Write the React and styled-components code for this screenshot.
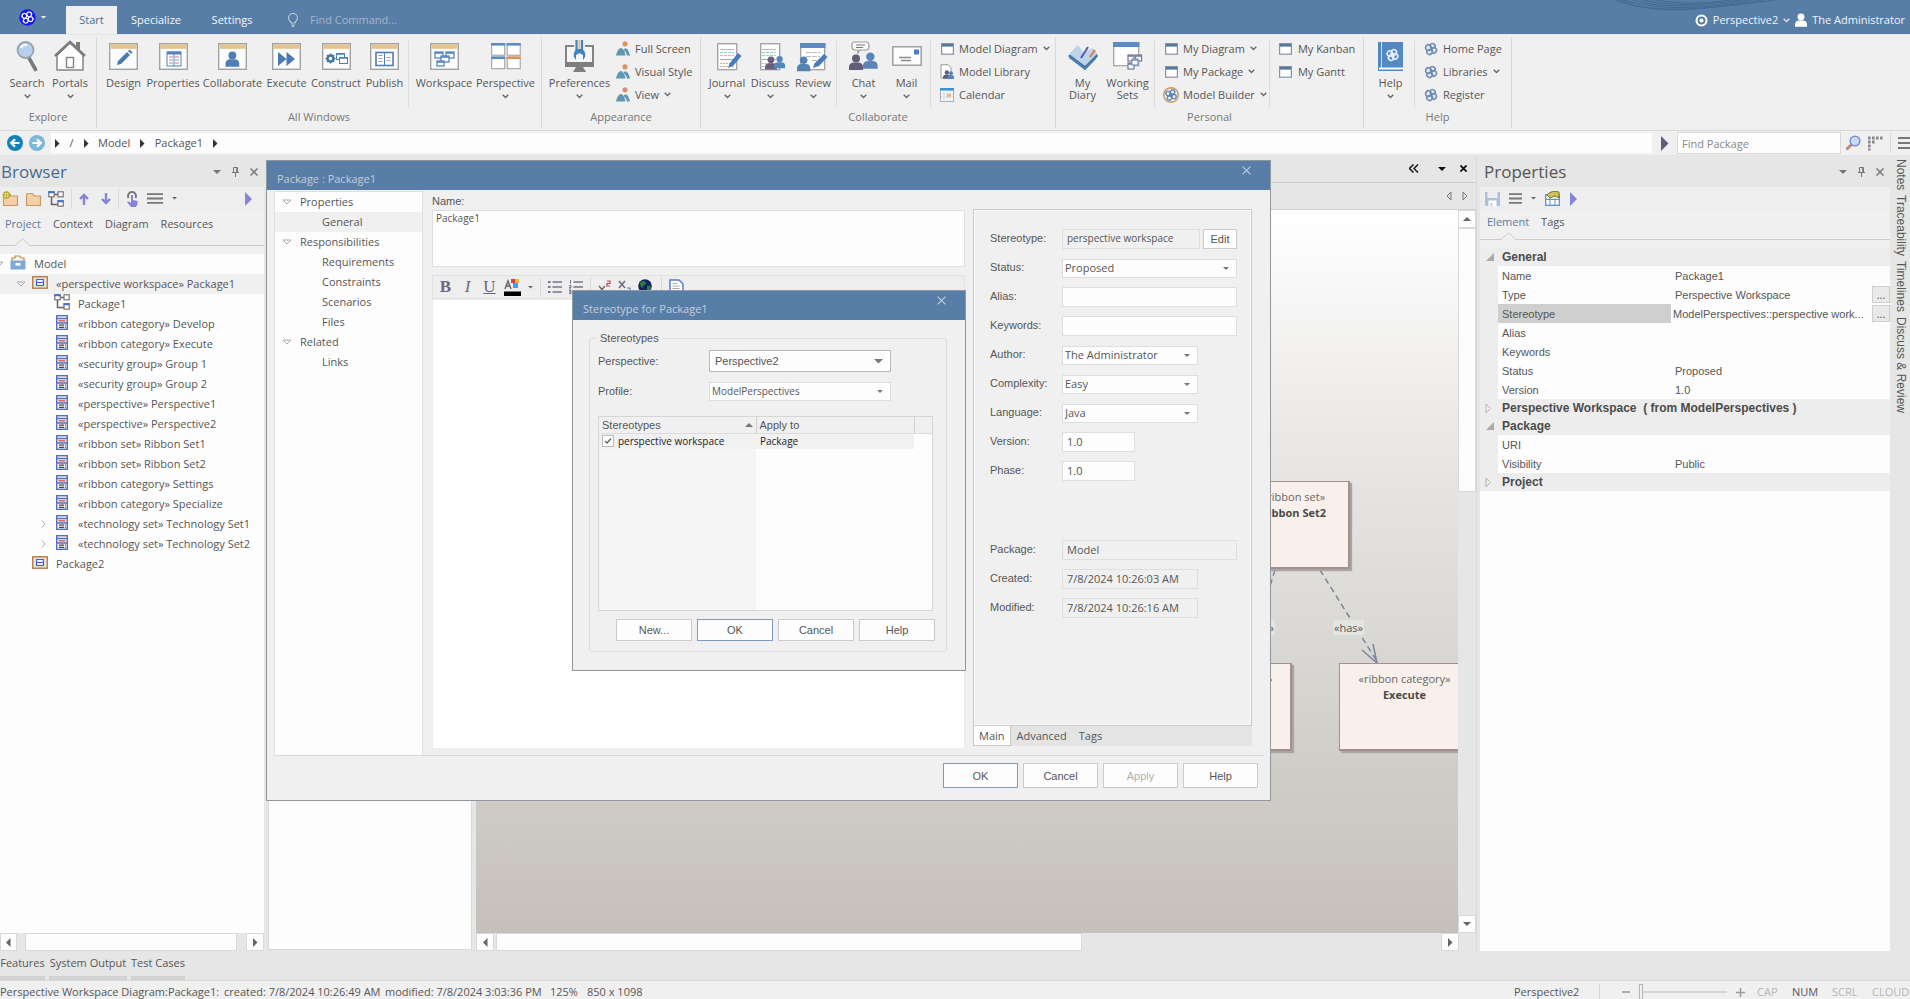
import React from "react";
import styled, { createGlobalStyle, css } from "styled-components";

const c = {
  blue: "#587da7",
  face: "#f0f0f0",
  band: "#e6e6e6",
  line: "#d9d9d9",
  text: "#565656",
  icon: "#4f7db8",
  violet: "#8583d8",
};

const Global = createGlobalStyle`
  * { box-sizing: border-box; }
  body { margin: 0; background: ${c.band}; overflow: hidden; }
  body, button, input, select, textarea {
    font-family: "Open Sans", "Noto Sans", sans-serif;
    font-size: 11px;
    line-height: 16px;
    color: ${c.text};
  }
  button { border: 0; padding: 0; background: none; white-space: nowrap; }
  a { color: inherit; text-decoration: none; }
  svg { display: block; flex: none; }
`;

/* ---------- shell ---------- */

const Shell = styled.div`
  position: relative;
  display: flex;
  flex-direction: column;
  height: 100vh;
  overflow: hidden;
`;

const Header = styled.header`
  position: relative;
  flex: none;
  display: flex;
  align-items: flex-end;
  height: 34px;
  background: ${c.blue};
  color: #eef2f7;
`;

const AppButton = styled.button`
  display: flex;
  align-items: center;
  gap: 5px;
  width: 66px;
  height: 34px;
  padding-left: 19px;
`;

const RibbonTab = styled.button`
  width: ${(p) => p.$w}px;
  height: 28px;
  font-size: 11px;
  background: ${(p) => (p.$active ? c.face : "transparent")};
  color: ${(p) => (p.$active ? "#4a6f9b" : "#f4f7fa")};
`;

const FindCommand = styled.label`
  display: flex;
  align-items: center;
  gap: 11px;
  height: 28px;
  padding-left: 18px;
  input {
    width: 160px;
    border: 0;
    padding: 0;
    background: none;
    color: #fff;
  }
  input::placeholder { color: #a5b5c8; opacity: 1; }
`;

const HeaderRight = styled.div`
  display: flex;
  align-items: center;
  gap: 5px;
  height: 28px;
  margin: 0 -7px 0 auto;
  button { display: flex; align-items: center; gap: 5px; color: #f1f4f8; }
`;

const Waves = styled.svg`
  position: absolute;
  top: 0;
  right: 130px;
`;

/* ---------- ribbon ---------- */

const Ribbon = styled.nav`
  flex: none;
  display: flex;
  height: 97px;
  padding: 2px 0 2px;
  background: ${c.face};
  border-top: 1px solid #e2e5e9;
  border-bottom: 1px solid ${c.line};
`;

const RibbonGroup = styled.section`
  display: flex;
  flex-direction: column;
  flex: none;
  width: ${(p) => p.$w}px;
  border-right: 1px solid ${c.line};
`;

const GroupBody = styled.div`
  display: flex;
  height: 72px;
  padding-left: ${(p) => p.$pad}px;
`;

const GroupLabel = styled.div`
  text-align: center;
  line-height: 16px;
  color: #777;
`;

const Divider = styled.div`
  flex: none;
  width: 1px;
  height: 66px;
  margin: 4px ${(p) => p.$r ?? 5}px 0 ${(p) => p.$l ?? 4}px;
  background: #dcdcdc;
`;

const BigButton = styled.button`
  display: flex;
  flex-direction: column;
  align-items: center;
  flex: none;
  width: ${(p) => p.$w}px;
  padding-top: 2px;
  line-height: 12px;
`;

const IconSlot = styled.span`
  display: flex;
  align-items: center;
  justify-content: center;
  height: 34px;
  margin-bottom: 4px;
`;

const BigLabel = styled.span`
  display: block;
  white-space: pre;
  margin-bottom: 5px;
`;

const SmallColumn = styled.div`
  display: flex;
  flex-direction: column;
  padding-left: ${(p) => p.$indent || 0}px;
`;

const SmallButton = styled.button`
  display: flex;
  align-items: center;
  gap: 5px;
  height: 23px;
`;

const SmallSlot = styled.span`
  display: flex;
  justify-content: center;
  width: 14px;
`;

/* ---------- address bar ---------- */

const AddressBar = styled.div`
  flex: none;
  display: flex;
  align-items: center;
  height: 24px;
  padding-left: 7px;
  background: ${c.face};
`;

const NavButton = styled.button`
  margin-right: 6px;
`;

const Crumbs = styled.nav`
  flex: 1;
  display: flex;
  align-items: center;
  gap: 10px;
  height: 20px;
  padding-left: 4px;
  margin-right: 9px;
  background: #fdfdfd;
`;

const FindPackage = styled.input`
  width: 164px;
  height: 22px;
  margin: 0 4px 0 9px;
  padding: 0 4px;
  border: 1px solid ${c.line};
  background: #fdfdfd;
  &::placeholder { color: #888; opacity: 1; }
`;

const AddressTools = styled.div`
  display: flex;
  align-items: center;
  gap: 7px;
`;

/* ---------- panels ---------- */

const Workspace = styled.main`
  flex: 1;
  min-height: 0;
  display: flex;
  background: ${c.band};
`;

const Panel = styled.section`
  display: flex;
  flex-direction: column;
  flex: none;
  width: ${(p) => p.$w}px;
  background: ${c.face};
`;

const PanelHeader = styled.div`
  flex: none;
  display: flex;
  align-items: center;
  gap: 11px;
  height: 32px;
  padding: 2px 6px 0 ${(p) => p.$pad}px;
  background: ${c.band};
  h2 {
    flex: 1;
    margin: 0;
    font-size: 17px;
    line-height: 24px;
    font-weight: 400;
    color: ${(p) => p.$color};
  }
`;

const PanelToolbar = styled.div`
  flex: none;
  display: flex;
  align-items: center;
  gap: ${(p) => p.$gap}px;
  height: 23px;
  padding: 0 12px 0 ${(p) => p.$pad}px;
  background: #eeeeee;
`;

const ToolGroup = styled.div`
  display: flex;
  align-items: center;
  gap: ${(p) => p.$gap}px;
`;

const ToolSep = styled.i`
  width: 1px;
  height: 20px;
  background: ${c.line};
`;

const Spring = styled.span`
  flex: 1;
`;

const PanelTabs = styled.div`
  flex: none;
  display: flex;
  gap: 12px;
  height: ${(p) => p.$h}px;
  padding: ${(p) => p.$top}px 0 0 ${(p) => p.$pad}px;
  margin-bottom: 8px;
  border-bottom: 1px solid #cbcbcb;
`;

const PanelTab = styled.button`
  display: flex;
  flex-direction: column;
  align-items: center;
  justify-content: space-between;
  margin-bottom: -1px;
  color: ${(p) => (p.$active ? "#5b7ba3" : c.text)};
`;

/* ---------- tree ---------- */

const Tree = styled.ul`
  flex: 1;
  min-height: 0;
  margin: 0;
  padding: 0;
  list-style: none;
  overflow: hidden;
  background: #fdfdfd;
`;

const TreeRow = styled.li`
  display: flex;
  align-items: center;
  height: 20px;
  padding: 0 0 0 ${(p) => p.$level * 22}px;
  white-space: nowrap;
  background: ${(p) => (p.$selected ? "#f0f0f0" : "transparent")};
`;

const Expander = styled.span`
  display: flex;
  justify-content: center;
  width: 22px;
  margin-left: -12px;
`;

const TreeIcon = styled.span`
  display: flex;
  justify-content: center;
  width: 16px;
  margin: 0 8px 4px 0;
`;

const ScrollBar = styled.div`
  flex: none;
  display: flex;
  flex-direction: ${(p) => (p.$vertical ? "column" : "row")};
  ${(p) => (p.$vertical ? "width: 18px;" : "height: 18px;")}
  background: ${c.band};
`;

const ScrollButton = styled.button`
  flex: none;
  display: flex;
  align-items: center;
  justify-content: center;
  width: ${(p) => p.$w || 18}px;
  height: 18px;
  border: 1px solid ${c.line};
  background: #fdfdfd;
`;

const ScrollThumb = styled.div`
  flex: ${(p) => p.$size};
  margin: ${(p) => p.$m};
  border: 1px solid ${c.line};
  background: #fdfdfd;
`;

const ScrollRest = styled.div`
  flex: ${(p) => p.$size};
`;

const Toolbox = styled.div`
  flex: none;
  width: 204px;
  margin: 0 4px 1px 4px;
  background: #fdfdfd;
  border: 1px solid ${c.line};
  border-top: 32px solid ${c.band};
`;

/* ---------- diagram ---------- */

const DiagramArea = styled.section`
  flex: 1;
  min-width: 0;
  display: flex;
  flex-direction: column;
  margin-right: 3px;
  border-right: 1px solid ${c.line};
`;

const DiagramBar = styled.div`
  flex: none;
  display: flex;
  justify-content: flex-end;
  align-items: center;
  gap: ${(p) => p.$gap}px;
  height: ${(p) => p.$h}px;
  padding-right: 9px;
  border-bottom: 1px solid #cfcfcf;
  background: ${c.band};
`;

const CollapseButton = styled.button`
  padding-right: 5px;
`;

const DiagramBody = styled.div`
  flex: 1;
  min-height: 0;
  display: flex;
`;

const Canvas = styled.div`
  position: relative;
  flex: 1;
  overflow: hidden;
  background: linear-gradient(#ffffff 0%, #e6e4e2 38%, #dbd9d5 58%, #d0cdc8 78%, #c6c0bb 100%);
`;

const Node = styled.div`
  position: absolute;
  left: ${(p) => p.$x}px;
  top: ${(p) => p.$y}px;
  width: ${(p) => p.$w}px;
  height: 88px;
  padding-top: 7px;
  border: 1px solid #a58f8f;
  border-width: 1px 2px 2px 1px;
  background: #faf0eb;
  box-shadow: 2px 2px 1px #a9a5a3;
  text-align: center;
  white-space: nowrap;
  color: #666;
  strong { display: block; color: #4a4a4a; }
`;

const LinkLabel = styled.span`
  position: absolute;
  left: ${(p) => p.$x}px;
  top: ${(p) => p.$y}px;
  padding: 0 1px;
  background: #e4e4e2;
  line-height: 15px;
`;

const Links = styled.svg`
  position: absolute;
  left: 0;
  top: 0;
`;

/* ---------- property sheet ---------- */

const Sheet = styled.div`
  flex: 1;
  background: #fdfdfd;
  font-family: "Liberation Sans", Arial, sans-serif;
`;

const SheetTable = styled.table`
  width: 100%;
  table-layout: fixed;
  border-collapse: collapse;
  font-size: 11px;
  line-height: 14px;
  td, th { padding: 0 4px; text-align: left; font-weight: 400; height: 19px; white-space: nowrap; overflow: hidden; }
  col:nth-child(1) { width: 18px; }
  col:nth-child(2) { width: 173px; }
  col:nth-child(4) { width: 18px; }
`;

const SheetHeading = styled.tr`
  background: #ededed;
  && th { height: 18px; font-size: 12px; font-weight: 700; color: #4b4b4b; white-space: pre; }
  && td { height: 18px; padding: 0 6px; overflow: visible; }
`;

const SheetRow = styled.tr`
  td:first-child { background: #ededed; }
  th { background: ${(p) => (p.$selected ? "#cfcfcf" : "transparent")}; }
  && td:last-child { padding: 0; }
  && td:nth-child(3) { padding: 0 ${(p) => (p.$selected ? 2 : 4)}px; }
`;

const EllipsisButton = styled.button`
  display: block;
  width: 18px;
  height: 17px;
  border: 1px solid #cfcfcf;
  background: #e9e9e9;
  line-height: 12px;
`;

const SideStrip = styled.aside`
  flex: none;
  display: flex;
  flex-direction: column;
  align-items: center;
  gap: 5px;
  width: 20px;
  padding-top: 4px;
  background: ${c.band};
  button {
    writing-mode: vertical-rl;
    font-family: "Liberation Sans", Arial, sans-serif;
    font-size: 12px;
    line-height: 14px;
    margin-left: 2px;
  }
`;

/* ---------- bottom bars ---------- */

const OutputTabs = styled.div`
  flex: none;
  display: flex;
  gap: 4px;
  height: 30px;
  border-bottom: 1px solid ${c.line};
  background: ${c.band};
  button {
    padding: 0 0 1px;
    border-bottom: 4px solid #d3d3d3;
    width: 45px;
  }
  button:nth-child(2) { width: 78px; }
  button:nth-child(3) { width: 54px; }
`;

const StatusBar = styled.footer`
  flex: none;
  display: flex;
  align-items: center;
  height: 18px;
  padding-top: 4px;
  background: ${c.face};
  white-space: nowrap;
`;

const StatusCell = styled.span`
  flex: none;
  width: ${(p) => p.$w}px;
  color: ${(p) => (p.$dim ? "#b5b5b5" : c.text)};
`;

const Zoom = styled.div`
  flex: none;
  display: flex;
  align-items: center;
  gap: 9px;
  width: 158px;
  padding-left: 22px;
  border-left: 1px solid ${c.line};
  input {
    appearance: none;
    width: 88px;
    height: 16px;
    margin: 0;
    background: linear-gradient(#d6d6d6, #d6d6d6) center / 100% 2px no-repeat;
  }
  input::-webkit-slider-thumb {
    appearance: none;
    width: 4px;
    height: 16px;
    border: 1px solid #b5b5b5;
    background: #f0f0f0;
  }
`;

/* ---------- dialogs ---------- */

const Dialog = styled.div`
  position: absolute;
  left: ${(p) => p.$x}px;
  top: ${(p) => p.$y}px;
  width: ${(p) => p.$w}px;
  display: flex;
  flex-direction: column;
  border: 1px solid #8f979f;
  background: ${c.face};
  font-family: "Liberation Sans", Arial, sans-serif;
`;

const DialogTitle = styled.div`
  display: flex;
  align-items: flex-start;
  justify-content: space-between;
  height: 29px;
  padding: 5px 19px 0 ${(p) => p.$pad}px;
  background: ${c.blue};
  h1 {
    margin: 5px 0 0;
    font: 400 11px/16px "Open Sans", sans-serif;
    color: #c3cedb;
  }
`;

const DialogBody = styled.div`
  display: flex;
  gap: 9px;
  height: 565px;
  padding: 1px 0 0 7px;
`;

const DialogNav = styled.ul`
  width: 149px;
  height: 565px;
  margin: 0;
  padding: 0;
  list-style: none;
  border: 1px solid #e0e0e0;
  background: #fdfdfd;
  font-family: "Open Sans", sans-serif;
`;

const NavRow = styled.li`
  display: flex;
  align-items: center;
  gap: 9px;
  height: 20px;
  padding-left: ${(p) => (p.$sub ? 47 : 8)}px;
  background: ${(p) => (p.$selected ? "#f0f0f0" : "transparent")};
`;

const EditorColumn = styled.div`
  display: flex;
  flex-direction: column;
  width: 533px;
  padding-top: 3px;
  label { line-height: 14px; }
`;

const NameBox = styled.textarea`
  height: 57px;
  margin: 2px 0 8px;
  padding: 0 3px;
  border: 1px solid #dedede;
  background: #fdfdfd;
  resize: none;
  font-size: 10px;
  line-height: 14px;
  outline: 0;
`;

const EditorBar = styled.div`
  display: flex;
  align-items: center;
  gap: 7px;
  height: 24px;
  padding: 0 5px;
  border: 1px solid #e2e2e2;
  background: #eeeeee;
`;

const FormatLetter = styled.button`
  width: 15px;
  font: ${(p) => (p.$bold ? 700 : 400)} 17px/20px "Liberation Serif", serif;
  color: #6b6880;
`;

const Notes = styled.textarea`
  height: 450px;
  border: 1px solid #ececec;
  background: #fff;
  resize: none;
`;

const FormColumn = styled.div`
  width: 279px;
  margin: 18px 0 0 -1px;
`;

const FormBox = styled.div`
  display: flex;
  flex-direction: column;
  gap: 9px;
  height: 517px;
  padding: 19px 0 0 16px;
  border: 1px solid #cacaca;
  box-shadow: inset 0 0 0 1px #fafafa;
`;

const FormRow = styled.div`
  display: grid;
  grid-template-columns: 72px ${(p) => p.$w}px auto;
  justify-content: start;
  align-items: center;
  height: 20px;
  margin-top: ${(p) => (p.$first ? 50 : 0)}px;
  label { line-height: 14px; padding-bottom: 2px; }
`;

const control = css`
  width: 100%;
  min-width: 0;
  border: 1px solid #dedede;
  border-radius: 0;
  background: #fdfdfd;
  outline: 0;
`;

const TextInput = styled.input`
  ${control}
  height: 20px;
  padding: 0 4px 2px;
  font-size: ${(p) => (p.$small ? 10 : 11)}px;
  background: ${(p) => (p.readOnly ? c.face : "#fdfdfd")};
`;

const SelectCell = styled.span`
  display: grid;
  align-items: center;
  select, svg { grid-area: 1 / 1; }
  svg { justify-self: end; margin-right: 8px; pointer-events: none; }
  select {
    ${control}
    appearance: none;
    height: ${(p) => p.$h || 19}px;
    padding: 0 ${(p) => p.$pad || 2}px;
    font-size: ${(p) => p.$size || 10}px;
    ${(p) => p.$strong && `border-color: #b9b9b9; font-family: "Liberation Sans", Arial, sans-serif;`}
  }
`;

const PushButton = styled.button`
  width: ${(p) => p.$w}px;
  height: ${(p) => p.$h || 25}px;
  border: 1px solid ${(p) => (p.$primary ? "#7d9bbb" : "#cbcbcb")};
  background: #fdfdfd;
  font-family: "Liberation Sans", Arial, sans-serif;
  margin-left: ${(p) => p.$ml || 0}px;
  &:disabled { color: #b0b0b0; }
`;

const FormTabs = styled.div`
  display: flex;
  height: 20px;
  background: #e4e4e4;
`;

const FormTab = styled.button`
  padding: 0 5px;
  border: 1px solid ${(p) => (p.$active ? "#cacaca" : "transparent")};
  border-top: 0;
  background: ${(p) => (p.$active ? "#fdfdfd" : "transparent")};
`;

const ButtonRow = styled.div`
  display: flex;
  justify-content: flex-end;
  gap: 5px;
  margin: ${(p) => p.$margin};
  padding: ${(p) => p.$padding};
  border-top: ${(p) => (p.$rule ? `1px solid ${c.line}` : 0)};
`;

const GroupBox = styled.fieldset`
  margin: 11px 18px 18px 16px;
  padding: 5px 11px 10px 8px;
  border: 1px solid #dedede;
  border-radius: 3px;
  legend { padding: 0 4px; margin-left: -2px; line-height: 14px; }
`;

const GroupRow = styled.div`
  display: grid;
  grid-template-columns: 111px 182px;
  align-items: center;
  height: 22px;
  margin-bottom: 8px;
`;

const StereoFrame = styled.div`
  height: 195px;
  width: 335px;
  margin: 14px 0 8px;
  border: 1px solid #d6d6d6;
  background: linear-gradient(90deg, #f5f5f5 157px, #fdfdfd 157px);
`;

const StereoTable = styled.table`
  width: 100%;
  table-layout: fixed;
  border-collapse: collapse;
  line-height: 14px;
  font-size: 11px;
  th { height: 16px; padding: 0 3px; font-weight: 400; text-align: left; background: ${c.face}; border-right: 1px solid #d0d0d0; border-bottom: 1px solid #dcdcdc; }
  th:last-child { border-right: 0; }
  td { height: 16px; padding: 0 4px; background: #f1f1f1; color: #222; font: 10px/14px "Open Sans", sans-serif; }
  td:last-child { background: #fdfdfd; }
  label, th > span { display: flex; align-items: center; gap: 4px; white-space: nowrap; }
  th > span { justify-content: space-between; }
`;

const Check = styled.span`
  display: grid;
  place-items: center;
  width: 12px;
  height: 12px;
  margin-left: -1px;
  input, svg { grid-area: 1 / 1; }
  svg { pointer-events: none; }
  input {
    appearance: none;
    width: 12px;
    height: 12px;
    margin: 0;
    border: 1px solid #bbb;
    background: #fff;
  }
`;

/* ---------- icons ---------- */

const Chevron = ({ color = "#666" }) => (
  <svg width="7" height="5" viewBox="0 0 7 5"><path d="M.7.7l2.8 2.8L6.3.7" fill="none" stroke={color} strokeWidth="1.3" /></svg>
);

const Tri = ({ dir = "down", s = 8, color = "#666", hollow }) => {
  const shape = {
    down: [s, s / 2, `M0 0H${s}L${s / 2} ${s / 2}z`],
    up: [s, s / 2, `M0 ${s / 2}H${s}L${s / 2} 0z`],
    right: [s / 2, s, `M0 0V${s}L${s / 2} ${s / 2}z`],
    left: [s / 2, s, `M${s / 2} 0V${s}L0 ${s / 2}z`],
  }[dir];
  return (
    <svg width={shape[0]} height={shape[1]} viewBox={`0 0 ${shape[0]} ${shape[1]}`} overflow="visible">
      <path d={shape[2]} fill={hollow ? "none" : color} stroke={hollow ? color : "none"} />
    </svg>
  );
};

const Knot = ({ size = 13, color = "#6d8bb3", back = "#e6ebf2", ring }) => (
  <svg width={size} height={size} viewBox="0 0 16 16">
    {ring && <circle cx="8" cy="8" r="7.3" fill={back} stroke={ring} strokeWidth="1.4" />}
    <g transform="rotate(28 8 8)">
      <g fill={back} stroke={color} strokeWidth={ring ? 1.3 : 1.8}>
        <circle cx="8" cy="4.6" r={ring ? 2.2 : 3.2} /><circle cx="11.4" cy="8" r={ring ? 2.2 : 3.2} />
        <circle cx="8" cy="11.4" r={ring ? 2.2 : 3.2} /><circle cx="4.6" cy="8" r={ring ? 2.2 : 3.2} />
      </g>
      <path d="M5.5 5.5l5 5M10.5 5.5l-5 5" stroke={color} strokeWidth="1.6" />
    </g>
  </svg>
);

const Logo = () => (
  <svg width="17" height="17" viewBox="0 0 17 17">
    <circle cx="8.5" cy="8.5" r="8.2" fill="#1515f0" />
    <g fill="none" stroke="#fff" strokeWidth="1.3" transform="rotate(28 8.5 8.5)">
      <circle cx="8.5" cy="5" r="2.4" /><circle cx="12" cy="8.5" r="2.4" />
      <circle cx="8.5" cy="12" r="2.4" /><circle cx="5" cy="8.5" r="2.4" />
    </g>
  </svg>
);

const Frame = ({ children, top = "#e4c38d" }) => (
  <svg width="29" height="27" viewBox="0 0 29 27">
    <rect x=".7" y=".7" width="27.6" height="25.6" fill="#fbfcfd" stroke="#a2a2a2" strokeWidth="1.4" />
    <rect x="1.4" y="1.4" width="26.2" height="4.4" fill={top} />
    {children}
  </svg>
);

const SearchIcon = () => (
  <svg width="22" height="31" viewBox="0 0 22 31">
    <path d="M13 17l6.5 11.5" stroke="#7a7a7a" strokeWidth="3.6" strokeLinecap="round" />
    <circle cx="9.5" cy="9" r="8" fill="#b5d0ee" stroke="#9aa2ab" strokeWidth="1.8" />
    <path d="M5 7a5 5 0 0 1 6-3" stroke="#fff" strokeWidth="2" fill="none" />
  </svg>
);
const HomeIcon = () => (
  <svg width="32" height="32" viewBox="0 0 32 32">
    <path d="M22 2h4v10l-4-4z" fill="#7c7c7c" />
    <path d="M3 15v15h26V15L16 3z" fill="#fdfdfd" stroke="#858585" strokeWidth="1.5" />
    <path d="M1 16L16 2l15 14" fill="none" stroke="#7c7c7c" strokeWidth="2.6" />
    <rect x="12.5" y="17.5" width="7" height="10" fill="#fff" stroke="#858585" strokeWidth="1.4" />
  </svg>
);
const DesignIcon = () => (
  <Frame><path d="M8 22l1-4L18 9l3 3-9 9z" fill="#4c78b5" /><path d="M19 8l1.5-1.5 3 3L22 11z" fill="#4c78b5" /></Frame>
);
const PropertiesIcon = () => (
  <Frame>
    <rect x="8" y="9" width="14" height="14" fill="#fff" stroke="#5a82ba" /><rect x="8" y="8.5" width="14" height="3" fill="#5a82ba" />
    <path d="M15 11v12" stroke="#5a82ba" />
    <path d="M10 14h4M16 14h4M10 20h4M16 20h4" stroke="#c78" /><path d="M10 17h4M16 17h4" stroke="#7a9" />
  </Frame>
);
const Person = ({ x = 0, y = 0, k = 1, color = "#4f7db8" }) => (
  <g transform={`translate(${x} ${y}) scale(${k})`} fill={color}>
    <circle cx="7" cy="4.5" r="4" /><path d="M0 16v-3c0-3 2-4.5 5-4.5h4c3 0 5 1.5 5 4.5v3z" />
  </g>
);
const CollaborateIcon = () => <Frame><Person x="7.5" y="8" k={0.98} /></Frame>;
const ExecuteIcon = () => <Frame><path d="M6 9l8.5 7L6 23zM14.5 9L23 16l-8.5 7z" fill="#4c78b5" /></Frame>;
const ConstructIcon = () => (
  <Frame>
    <circle cx="8.5" cy="15.5" r="3" fill="none" stroke="#47789c" strokeWidth="2.6" />
    <path d="M8.5 10.5v2M8.5 18.5v2M3.5 15.5h2M11.5 15.5h2M5 12l1.5 1.5M12 12l-1.5 1.5M5 19l1.5-1.5M12 19l-1.5-1.5" stroke="#47789c" strokeWidth="1.6" />
    <rect x="14.5" y="10.5" width="8" height="6" fill="#fff" stroke="#4f7db8" /><rect x="17.5" y="14.5" width="8" height="6" fill="#fff" stroke="#4f7db8" />
    <path d="M14.5 11h8M17.5 15h8" stroke="#4f7db8" strokeWidth="1.6" />
  </Frame>
);
const PublishIcon = () => (
  <Frame>
    <rect x="6" y="9.5" width="17" height="13" fill="#fff" stroke="#4f7db8" strokeWidth="1.6" /><path d="M14.5 9.5v13" stroke="#4f7db8" />
    <path d="M8.5 12.5h4M8.5 18.5h4M16.5 14.5h4" stroke="#999" /><path d="M8.5 15.5h4M16.5 17.5h4" stroke="#c99" />
  </Frame>
);
const MiniWindow = ({ x, y, w = 8, h = 6, color = "#4f7db8" }) => (
  <g><rect x={x} y={y} width={w} height={h} fill="#fff" stroke={color} strokeWidth="1.2" /><path d={`M${x} ${y + 1}h${w}`} stroke={color} strokeWidth="1.5" /></g>
);
const WorkspaceIcon = () => (
  <Frame><MiniWindow x={5} y={9} /><MiniWindow x={16} y={9} /><MiniWindow x={11} y={13} /><MiniWindow x={7} y={18} w={7} h={5} /></Frame>
);
const PerspectiveIcon = () => (
  <svg width="30" height="27" viewBox="0 0 30 27">
    {[[0, 0, "#5b8cc4"], [15.5, 0, "#5b8cc4"], [0, 13.5, "#5b8cc4"], [15.5, 13.5, "#d9935f"]].map(([x, y, f]) => (
      <g key={`${x}-${y}`}><rect x={x + 0.7} y={y + 0.7} width="13" height="11.5" fill="#fff" stroke="#9b9b9b" /><rect x={x} y={y} width="14.2" height="2.6" fill={f} /></g>
    ))}
  </svg>
);
const PreferencesIcon = () => (
  <svg width="29" height="32" viewBox="0 0 29 32">
    <rect x="1" y="6" width="27" height="17" fill="#f5f5f5" stroke="#848484" strokeWidth="2" />
    <path d="M0 22h29v5H0zM11 27h7l3 5H8z" fill="#7e7e7e" />
    <rect x="9" y="3" width="11" height="12" fill="#f0f0f0" />
    <path d="M11.5 0v11M17 0v11" stroke="#3f82c3" strokeWidth="2.2" /><path d="M14.3 0v11" stroke="#e0c080" strokeWidth="1.8" />
    <path d="M12 9h5c3 2 4 5 3 8l-2 3v-5l-3.5-2-3.5 2v5l-2-3c-1-3 0-6 3-8z" fill="#3f82c3" />
  </svg>
);
const Scene = () => (
  <svg width="14" height="15" viewBox="0 0 14 15">
    <circle cx="9" cy="2.8" r="2.6" fill="#d89468" /><path d="M0 14.5C1 10 3 7 5 7s4 4 4.5 7.5zM7.5 9C9 7 10 7 11 8c1.5 1.5 2.5 4 3 6.5H11c-.5-2.5-2-4.5-3.5-5.5z" fill="#5f97ae" />
  </svg>
);
const Page = ({ children, top }) => (
  <svg width="32" height="31" viewBox="0 0 32 31">
    <rect x={top ? 3.7 : 6.7} y="2.7" width={top ? 24 : 19} height="26" fill="#fcfcfc" stroke="#a0a0a0" strokeWidth="1.3" />
    {top && <rect x="3" y="2" width="25.5" height="5" fill="#5b8cc4" />}
    {children}
  </svg>
);
const Lines = ({ x = 9, w = 14 }) => (
  <g><path d={`M${x} 8.5h${w}`} stroke="#bbb" /><path d={`M${x} 11.5h${w}M${x} 14.5h${w}`} stroke="#9fd0bd" strokeDasharray="3 1" /><path d={`M${x} 18.5h${w}`} stroke="#aaa" /><path d={`M${x} 22.5h${w}M${x} 25.5h${w}`} stroke="#d9a7a7" strokeDasharray="2 1" /></g>
);
const Pencil = () => <path d="M17 27l1.5-4.5L27 12l3.5 3-8.5 10z" fill="#4a7cbc" />;
const JournalIcon = () => <Page><Lines /><Pencil /></Page>;
const DiscussIcon = () => <Page><Lines x={8} /><Person x="11" y="15" k={0.85} color="#665f7c" /><Person x="20" y="14.5" k={0.8} color="#5787b9" /></Page>;
const ReviewIcon = () => <Page top><path d="M9 11.5h14M9 15.5h14M15 19.5h7" stroke="#bbb" strokeDasharray="5 1" /><Person x="0" y="15" k={0.95} color="#5184b0" /><path d="M16 27l1.5-4.5L27 13l3.5 3-8.5 9z" fill="#4a7cbc" /></Page>;
const ChatIcon = () => (
  <svg width="30" height="31" viewBox="0 0 30 31">
    <path d="M5 1h12c4 0 4 8 0 8h-6l-2 3v-3H6C2 9 2 1 5 1z" fill="#fafafa" stroke="#999" strokeWidth="1.2" /><path d="M7 4h9M7 6.5h7" stroke="#777" />
    <Person x="0" y="13" k={1} color="#625c78" /><Person x="14" y="11" k={1.05} color="#5b84b9" />
  </svg>
);
const MailIcon = () => (
  <svg width="30" height="20" viewBox="0 0 30 20">
    <rect x=".8" y=".8" width="28.4" height="18.4" fill="#fdfdfd" stroke="#a0a0a0" strokeWidth="1.5" /><rect x="22" y="3.5" width="5" height="5" fill="#4b82c2" /><path d="M7 11.5h12M9 14.5h10" stroke="#8b8b8b" strokeWidth="1.4" />
  </svg>
);
const DiaryIcon = () => (
  <svg width="30" height="27" viewBox="0 0 30 27">
    <path d="M0 13l10-7 6 6 9-6 5 7-13 14z" fill="#2f5c86" /><path d="M1 11l9-9 6 8 8-5 5 6-12 12z" fill="#bcd3ea" /><path d="M2 12l15 12 12-12-1 4-11 11L1 15z" fill="#4b7fae" />
    <path d="M20 4l-7 11" stroke="#5a58a8" strokeWidth="2" /><path d="M27 7l-5 7" stroke="#d9785a" strokeWidth="2" />
  </svg>
);
const WorkingSetsIcon = () => (
  <svg width="30" height="28" viewBox="0 0 30 28">
    <rect x=".7" y=".7" width="25" height="23" fill="#fdfdfd" stroke="#a0a0a0" strokeWidth="1.2" /><rect x="0" y="0" width="26.4" height="5" fill="#5b8cc4" />
    <MiniWindow x={15} y={13} w={6} color="#77758c" /><MiniWindow x={22.5} y={13} w={6} color="#77758c" /><MiniWindow x={15} y={21} w={6} color="#77758c" /><MiniWindow x={19} y={17} w={6} color="#6f94bf" />
  </svg>
);
const HelpIcon = () => (
  <svg width="26" height="29" viewBox="0 0 26 29">
    <rect width="25" height="29" fill="#5189c0" /><path d="M3.5 0v26" stroke="#d4e2f0" /><path d="M1 26.5h24" stroke="#fff" strokeWidth="2" />
    <g fill="none" stroke="#e8f0f8" strokeWidth="1.5" transform="rotate(28 14.5 13)"><circle cx="14.5" cy="10" r="2.7" /><circle cx="17.5" cy="13" r="2.7" /><circle cx="14.5" cy="16" r="2.7" /><circle cx="11.5" cy="13" r="2.7" /></g>
  </svg>
);
const SmallWindow = () => (
  <svg width="13" height="12" viewBox="0 0 13 12"><rect x=".6" y=".6" width="11.8" height="10.6" fill="#fdfdfd" stroke="#8793a3" strokeWidth="1.2" /><rect x="1" y="1" width="11" height="2.6" fill="#55789f" /></svg>
);
const LibraryIcon = () => (
  <svg width="14" height="16" viewBox="0 0 14 16"><path d="M1 .7h7l3 3V14H1z" fill="#fff" stroke="#999" /><Person x="3" y="6" k={0.55} color="#625c78" /><Person x="7.5" y="7" k={0.5} color="#5787b9" /></svg>
);
const CalendarIcon = () => (
  <svg width="14" height="14" viewBox="0 0 14 14"><rect x=".5" y=".5" width="13" height="13" fill="#fdfdfd" stroke="#aab" /><rect width="14" height="2.6" fill="#3c93c8" /><path d="M4 3v10M7 3v10M10 3v10M1 6h12M1 9h12" stroke="#d5d9df" /><rect x="7" y="6" width="4" height="3" fill="#f3b873" /></svg>
);
const Arrow = ({ dir, fill }) => (
  <svg width="16" height="16" viewBox="0 0 16 16"><circle cx="8" cy="8" r="8" fill={fill} /><path d={dir === "left" ? "M12.5 8H4.5M8 4.2L4.2 8 8 11.8" : "M3.5 8h8M8 4.2L11.8 8 8 11.8"} fill="none" stroke="#fff" strokeWidth="2.2" /></svg>
);
const Pin = () => (
  <svg width="7" height="10" viewBox="0 0 7 10"><path d="M1.5.5h4v5h-4zM0 5.5h7M3.5 5.5V10M4.7.5v5" fill="none" stroke="#777" /></svg>
);
const Cross = ({ s = 8, color = "#666", w = 1.5 }) => (
  <svg width={s} height={s} viewBox="0 0 8 8"><path d="M.5.5l7 7M7.5.5l-7 7" stroke={color} strokeWidth={w} /></svg>
);
const Folder = ({ star }) => (
  <svg width="17" height="16" viewBox="0 0 17 16">
    <path d="M1.5 5V3.5l1-1h5L9 5h6.5v9.5h-14z" fill="#f5cfa8" stroke="#c79a68" strokeWidth="1.2" />
    {star && <g><circle cx="4.5" cy="4" r="3" fill="#fbf7c5" stroke="#b8ab36" strokeWidth="1.6" /><path d="M4.5 0v8M.5 4h8" stroke="#b8ab36" /></g>}
  </svg>
);
const DiagramIcon = () => (
  <svg width="16" height="16" viewBox="0 0 16 16">
    <path d="M6 3.5h4M3.5 6v7.5H10" fill="none" stroke="#666" strokeWidth="1.5" />
    <g fill="#fff" stroke="#777" strokeWidth="1.2"><rect x=".8" y=".8" width="5.4" height="5" /><rect x="10" y=".8" width="5.2" height="5" /><rect x="10" y="9.8" width="5.2" height="5.4" /></g>
    <path d="M.2 1.2h6.6M9.4 10.2h6.4" stroke="#4a6fd0" strokeWidth="2" />
  </svg>
);
const VArrow = ({ down }) => (
  <svg width="10" height="12" viewBox="0 0 10 12"><path d={down ? "M5 0v10M1 6l4 4 4-4" : "M5 12V2M1 6l4-4 4 4"} fill="none" stroke={c.violet} strokeWidth="2.4" /></svg>
);
const Touch = () => (
  <svg width="12" height="16" viewBox="0 0 12 16"><path d="M2.5 7a4 4 0 1 1 7 0" fill="none" stroke="#777" strokeWidth="2" /><path d="M5 4h2v5l4.5 1v3L10 16H5l-4-5 1.5-.5L5 12z" fill={c.violet} /></svg>
);
const Burger = ({ w = 16 }) => (
  <svg width={w} height="11" viewBox={`0 0 ${w} 11`}><path d={`M0 1.2h${w}M0 5.5h${w}M0 9.8h${w}`} stroke="#777" strokeWidth="1.8" /></svg>
);
const RootIcon = () => (
  <svg width="16" height="15" viewBox="0 0 16 15"><path d="M2 6V3h3V1h5l1 2h3v3" fill="#fdf6ee" stroke="#b98a55" strokeWidth="1.2" /><rect x=".5" y="5.5" width="15" height="9" fill="#7fa9d8" /><rect x="5.5" y="8" width="5" height="2.6" fill="#fff" /></svg>
);
const PackageIcon = () => (
  <svg width="16" height="13" viewBox="0 0 16 13"><rect x=".8" y=".8" width="14.4" height="11.4" fill="#f3eae0" stroke="#b58148" strokeWidth="1.5" /><rect x="4.5" y="3.5" width="7" height="6" fill="#fff" stroke="#4662c8" strokeWidth="1.2" /><path d="M4.5 6.5h7" stroke="#4662c8" strokeWidth="1.2" /></svg>
);
const ListIcon = () => (
  <svg width="12" height="15" viewBox="0 0 12 15"><rect x=".7" y=".7" width="10.6" height="13.6" fill="#fbfbff" stroke="#5070c4" strokeWidth="1.4" /><path d="M1 3.5h10M1 8h10" stroke="#5070c4" strokeWidth="1.4" /><path d="M2.5 5.8h7" stroke="#e07070" strokeWidth="1.8" /><path d="M3 10.2h5M3 12.3h5M8.8 10.2h1M8.8 12.3h1" stroke="#444" strokeWidth="1.3" /></svg>
);
const Closed = () => (
  <svg width="5" height="8" viewBox="0 0 5 8"><path d="M.7.5L4.2 4 .7 7.5" fill="none" stroke="#aaa" /></svg>
);
const Notch = () => (
  <svg width="15" height="8" viewBox="0 0 15 8"><path d="M0 8L7.5 .8 15 8z" fill={c.face} /><path d="M0 7.5L7.5 .8 15 7.5" fill="none" stroke="#cbcbcb" /></svg>
);
const Bullets = ({ numbered }) => (
  <svg width="14" height="14" viewBox="0 0 14 14"><path d="M4.5 2H14M4.5 7H14M4.5 12H14" stroke="#77748c" strokeWidth="1.4" />{numbered ? <path d="M1.5 0v3.5M0 5.5h2v2H0v1.5h2M0 10.5h2v3H0M0 12h2" fill="none" stroke="#77748c" /> : <path d="M0 2h2.5M0 7h2.5M0 12h2.5" stroke="#77748c" strokeWidth="2.2" />}</svg>
);
const ColourIcon = () => (
  <svg width="17" height="17" viewBox="0 0 17 17"><path d="M1 10L4 2l3 8M2.5 7h4" fill="none" stroke="#666" strokeWidth="1.5" /><path d="M7 0h4v4H7z" fill="#e33c3c" /><path d="M11 0h4v4h-4z" fill="#f5b53f" /><path d="M9 4h5v5H9z" fill="#3f9fef" /><path d="M0 12.5h17V17H0z" fill="#000" /></svg>
);
const Globe = () => (
  <svg width="16" height="16" viewBox="0 0 16 16"><circle cx="7" cy="7" r="6.8" fill="#15205e" /><path d="M2 4c2-3 6-2 6 0s-3 2-3 4-3 0-3-4zM9 7c2-1 4 0 4 2s-3 3-4 2z" fill="#2c7a45" /><path d="M6 13c2-3 8-3 10 0v3H6z" fill="#b47f30" /></svg>
);
const DocIcon = () => (
  <svg width="15" height="16" viewBox="0 0 15 16"><path d="M1 1h9l4 4v10H1z" fill="#fff" stroke="#5a7ad0" strokeWidth="1.5" /><path d="M3.5 4.5h5M3.5 7h7M3.5 9.5h7" stroke="#aaa" /><path d="M8 12h4v3H8z" fill="#d65a5a" /></svg>
);
const SaveIcon = () => (
  <svg width="15" height="14" viewBox="0 0 15 14"><path d="M0 0h2.5v6h10V0H15v14H0z" fill="#a9c3de" /><rect x="3.5" y="8.5" width="8" height="5.5" fill="#fff" /><path d="M6.5 11v3" stroke="#a9c3de" strokeWidth="1.5" /></svg>
);
const GridIcon = () => (
  <svg width="16" height="15" viewBox="0 0 16 15"><rect x=".7" y="3.7" width="13.6" height="10.6" fill="#fff" stroke="#5f8fc4" strokeWidth="1.3" /><path d="M5 4v10M10 7v7M1 8.5h13" stroke="#5f8fc4" /><path d="M2 4c3-4 8-4 12-3v6l-4-2-5 2z" fill="#cfc05a" stroke="#77702f" /></svg>
);
const Marks = () => (
  <svg width="15" height="15" viewBox="0 0 15 15"><path d="M1.3 .5v14M5.3 .5v7M9.3 .5v3M13.3 .5v3" stroke="#888" strokeWidth="2.6" strokeDasharray="3 1" /></svg>
);
const Tick = () => (
  <svg width="10" height="10" viewBox="0 0 10 10"><path d="M2 5l2 2 4-4.5" fill="none" stroke="#666" strokeWidth="1.4" /></svg>
);

/* ---------- data ---------- */

const LIST = ["«ribbon category» Develop", "«ribbon category» Execute", "«security group» Group 1", "«security group» Group 2", "«perspective» Perspective1", "«perspective» Perspective2", "«ribbon set» Ribbon Set1", "«ribbon set» Ribbon Set2", "«ribbon category» Settings", "«ribbon category» Specialize"];

const TREE = [
  { level: 0, label: "Model", icon: <RootIcon />, state: "open" },
  { level: 1, label: "«perspective workspace» Package1", icon: <PackageIcon />, state: "open", selected: true },
  { level: 2, label: "Package1", icon: <DiagramIcon /> },
  ...LIST.map((label) => ({ level: 2, label, icon: <ListIcon /> })),
  { level: 2, label: "«technology set» Technology Set1", icon: <ListIcon />, state: "closed" },
  { level: 2, label: "«technology set» Technology Set2", icon: <ListIcon />, state: "closed" },
  { level: 1, label: "Package2", icon: <PackageIcon /> },
];

const NAV = [["Properties"], ["General", 1], ["Responsibilities"], ["Requirements", 1], ["Constraints", 1], ["Scenarios", 1], ["Files", 1], ["Related"], ["Links", 1]];

const SHEET = [
  { head: "General", open: true },
  { name: "Name", value: "Package1" },
  { name: "Type", value: "Perspective Workspace", more: true },
  { name: "Stereotype", value: "ModelPerspectives::perspective work...", more: true, selected: true },
  { name: "Alias" },
  { name: "Keywords" },
  { name: "Status", value: "Proposed" },
  { name: "Version", value: "1.0" },
  { head: "Perspective Workspace  ( from ModelPerspectives )" },
  { head: "Package", open: true },
  { name: "URI" },
  { name: "Visibility", value: "Public" },
  { head: "Project" },
];

/* ---------- composed parts ---------- */

const Big = ({ w, icon, label, menu }) => (
  <BigButton $w={w}>
    <IconSlot>{icon}</IconSlot>
    <BigLabel>{label}</BigLabel>
    {menu && <Chevron />}
  </BigButton>
);

const Small = ({ icon, label, menu }) => (
  <SmallButton><SmallSlot>{icon}</SmallSlot><span>{label}</span>{menu && <Chevron />}</SmallButton>
);

const Group = ({ w, pad = 0, label, children }) => (
  <RibbonGroup $w={w} aria-label={label}>
    <GroupBody $pad={pad}>{children}</GroupBody>
    <GroupLabel>{label}</GroupLabel>
  </RibbonGroup>
);

const Select = ({ id, value, ...rest }) => (
  <SelectCell {...rest}>
    <select id={id} defaultValue={value}><option>{value}</option></select>
    <Tri s={rest.$strong ? 9 : 6} color="#777" />
  </SelectCell>
);

const Field = ({ id, label, value = "", w = 175, type = "text", first, small, readOnly, children }) => (
  <FormRow $w={w} $first={first}>
    <label htmlFor={id}>{label}</label>
    {type === "select" ? <Select id={id} value={value} $size={11} /> : <TextInput id={id} defaultValue={value} readOnly={readOnly} $small={small} />}
    {children}
  </FormRow>
);

const TitleTools = () => (
  <>
    <button aria-label="Options"><Tri s={8} color="#777" /></button>
    <button aria-label="Pin"><Pin /></button>
    <button aria-label="Close"><Cross color="#777" /></button>
  </>
);

function RibbonBar() {
  return (
    <Ribbon>
      <Group w={97} pad={5} label="Explore">
        <Big w={44} icon={<SearchIcon />} label="Search" menu />
        <Big w={42} icon={<HomeIcon />} label="Portals" menu />
      </Group>
      <Group w={445} pad={3} label="All Windows">
        <Big w={47} icon={<DesignIcon />} label="Design" />
        <Big w={52} icon={<PropertiesIcon />} label="Properties" />
        <Big w={67} icon={<CollaborateIcon />} label="Collaborate" />
        <Big w={41} icon={<ExecuteIcon />} label="Execute" />
        <Big w={58} icon={<ConstructIcon />} label="Construct" />
        <Big w={39} icon={<PublishIcon />} label="Publish" />
        <Divider />
        <Big w={60} icon={<WorkspaceIcon />} label="Workspace" />
        <Big w={63} icon={<PerspectiveIcon />} label="Perspective" menu />
      </Group>
      <Group w={159} pad={6} label="Appearance">
        <Big w={63} icon={<PreferencesIcon />} label="Preferences" menu />
        <SmallColumn $indent={5}>
          <Small icon={<Scene />} label="Full Screen" />
          <Small icon={<Scene />} label="Visual Style" />
          <Small icon={<Scene />} label="View" menu />
        </SmallColumn>
      </Group>
      <Group w={355} pad={4} label="Collaborate">
        <Big w={44} icon={<JournalIcon />} label="Journal" menu />
        <Big w={42} icon={<DiscussIcon />} label="Discuss" menu />
        <Big w={44} icon={<ReviewIcon />} label="Review" menu />
        <Divider $l={1} />
        <Big w={43} icon={<ChatIcon />} label="Chat" menu />
        <Big w={43} icon={<MailIcon />} label="Mail" menu />
        <Divider $l={2} $r={9} />
        <SmallColumn>
          <Small icon={<SmallWindow />} label="Model Diagram" menu />
          <Small icon={<LibraryIcon />} label="Model Library" />
          <Small icon={<CalendarIcon />} label="Calendar" />
        </SmallColumn>
      </Group>
      <Group w={308} pad={4} label="Personal">
        <Big w={45} icon={<DiaryIcon />} label={"My\nDiary"} />
        <Big w={45} icon={<WorkingSetsIcon />} label={"Working\nSets"} />
        <Divider $r={9} />
        <SmallColumn>
          <Small icon={<SmallWindow />} label="My Diagram" menu />
          <Small icon={<SmallWindow />} label="My Package" menu />
          <Small icon={<Knot size={16} color="#5787b9" back="#f3ece2" ring="#c79a68" />} label="Model Builder" menu />
        </SmallColumn>
        <Divider $l={2} $r={9} />
        <SmallColumn>
          <Small icon={<SmallWindow />} label="My Kanban" />
          <Small icon={<SmallWindow />} label="My Gantt" />
        </SmallColumn>
      </Group>
      <Group w={148} pad={4} label="Help">
        <Big w={45} icon={<HelpIcon />} label="Help" menu />
        <Divider $l={1} $r={9} />
        <SmallColumn>
          <Small icon={<Knot size={14} />} label="Home Page" />
          <Small icon={<Knot size={14} />} label="Libraries" menu />
          <Small icon={<Knot size={14} />} label="Register" />
        </SmallColumn>
      </Group>
    </Ribbon>
  );
}

function Browser() {
  return (
    <Panel $w={264}>
      <PanelHeader $pad={1} $color="#4b6a8f"><h2>Browser</h2><TitleTools /></PanelHeader>
      <PanelToolbar $pad={2} $gap={7}>
        <ToolGroup $gap={6}>
          <button aria-label="New package"><Folder star /></button>
          <button aria-label="New folder"><Folder /></button>
          <button aria-label="New diagram"><DiagramIcon /></button>
        </ToolGroup>
        <ToolSep />
        <ToolGroup $gap={12}>
          <button aria-label="Move up"><VArrow /></button>
          <button aria-label="Move down"><VArrow down /></button>
        </ToolGroup>
        <ToolSep />
        <ToolGroup $gap={9}>
          <button aria-label="Touch"><Touch /></button>
          <button aria-label="Menu"><Burger /></button>
          <Tri s={5} />
        </ToolGroup>
        <Spring />
        <button aria-label="More"><Tri dir="right" s={14} color={c.violet} /></button>
      </PanelToolbar>
      <PanelTabs $h={36} $top={6} $pad={5}>
        <PanelTab $active><span>Project</span><Notch /></PanelTab>
        <PanelTab>Context</PanelTab>
        <PanelTab>Diagram</PanelTab>
        <PanelTab>Resources</PanelTab>
      </PanelTabs>
      <Tree>
        {TREE.map((row) => (
          <TreeRow key={row.label + row.level} $level={row.level} $selected={row.selected}>
            <Expander>
              {row.state === "open" && <Tri s={8} color="#aaa" hollow />}
              {row.state === "closed" && <Closed />}
            </Expander>
            <TreeIcon>{row.icon}</TreeIcon>
            {row.label}
          </TreeRow>
        ))}
      </Tree>
      <ScrollBar>
        <ScrollButton $w={17} aria-label="Scroll left"><Tri dir="left" s={9} /></ScrollButton>
        <ScrollThumb $size={1} $m="0 9px 0 8px" />
        <ScrollButton aria-label="Scroll right"><Tri dir="right" s={9} /></ScrollButton>
      </ScrollBar>
    </Panel>
  );
}

function Diagram() {
  return (
    <DiagramArea>
      <DiagramBar $h={28} $gap={14}>
        <CollapseButton aria-label="Collapse"><svg width="10" height="9" viewBox="0 0 10 9"><path d="M4.5.5l-4 4 4 4M9 .5l-4 4 4 4" fill="none" stroke="#222" strokeWidth="1.6" /></svg></CollapseButton>
        <button aria-label="Windows"><Tri s={8} color="#111" /></button>
        <button aria-label="Close diagram"><Cross s={7} color="#111" w={2} /></button>
      </DiagramBar>
      <DiagramBar $h={27} $gap={12}>
        <button aria-label="Previous"><Tri dir="left" s={8} color="#777" hollow /></button>
        <button aria-label="Next"><Tri dir="right" s={8} color="#777" hollow /></button>
      </DiagramBar>
      <DiagramBody>
        <Canvas>
          <Links width="982" height="723" viewBox="0 0 982 723" fill="none" stroke="#7a849c" strokeWidth="1.5">
            <path d="M844 360L902 453M799 360L770 453" strokeDasharray="6 4" />
            <path d="M886 440L901 453 897 434" />
          </Links>
          <Node $x={762} $y={271} $w={112}>«ribbon set»<strong>Ribbon Set2</strong></Node>
          <Node $x={686} $y={453} $w={130}>«ribbon category»<strong>Develop</strong></Node>
          <Node $x={863} $y={453} $w={132}>«ribbon category»<strong>Execute</strong></Node>
          <LinkLabel $x={768} $y={410}>«has»</LinkLabel>
          <LinkLabel $x={857} $y={410}>«has»</LinkLabel>
        </Canvas>
        <ScrollBar $vertical>
          <ScrollButton aria-label="Scroll up"><Tri dir="up" s={8} /></ScrollButton>
          <ScrollThumb $size={263} $m="0" />
          <ScrollRest $size={424} />
          <ScrollButton aria-label="Scroll down"><Tri s={8} /></ScrollButton>
        </ScrollBar>
      </DiagramBody>
      <ScrollBar>
        <ScrollButton aria-label="Scroll diagram left"><Tri dir="left" s={9} /></ScrollButton>
        <ScrollThumb $size={586} $m="0 0 0 2px" />
        <ScrollRest $size={360} />
        <ScrollButton aria-label="Scroll diagram right"><Tri dir="right" s={9} /></ScrollButton>
        <ScrollRest $size={17} />
      </ScrollBar>
    </DiagramArea>
  );
}

function PropertyPanel() {
  return (
    <Panel $w={410}>
      <PanelHeader $pad={4} $color="#555"><h2>Properties</h2><TitleTools /></PanelHeader>
      <PanelToolbar $pad={5} $gap={9}>
        <button aria-label="Save"><SaveIcon /></button>
        <button aria-label="View"><Burger w={13} /></button>
        <Tri s={5} />
        <button aria-label="Options"><GridIcon /></button>
        <button aria-label="Run"><Tri dir="right" s={14} color={c.violet} /></button>
      </PanelToolbar>
      <PanelTabs $h={30} $top={4} $pad={7}>
        <PanelTab $active><span>Element</span><Notch /></PanelTab>
        <PanelTab>Tags</PanelTab>
      </PanelTabs>
      <Sheet>
        <SheetTable>
          <colgroup><col /><col /><col /><col /></colgroup>
          <tbody>
            {SHEET.map((r) =>
              r.head ? (
                <SheetHeading key={r.head}>
                  <td>{r.open ? <svg width="8" height="8" viewBox="0 0 8 8"><path d="M8 0v8H0z" fill="#aaa" /></svg> : <Tri dir="right" s={9} color="#b5b5b5" hollow />}</td>
                  <th colSpan={3}>{r.head}</th>
                </SheetHeading>
              ) : (
                <SheetRow key={r.name} $selected={r.selected}>
                  <td />
                  <th scope="row">{r.name}</th>
                  <td>{r.value}</td>
                  <td>{r.more && <EllipsisButton aria-label={`Edit ${r.name}`}>...</EllipsisButton>}</td>
                </SheetRow>
              )
            )}
          </tbody>
        </SheetTable>
      </Sheet>
    </Panel>
  );
}

function PackageDialog() {
  return (
    <Dialog role="dialog" aria-label="Package" $x={266} $y={160} $w={1005}>
      <DialogTitle $pad={10}><h1>Package : Package1</h1><button aria-label="Close package dialog"><Cross s={9} color="#c3cedb" w={1} /></button></DialogTitle>
      <DialogBody>
        <DialogNav>
          {NAV.map(([label, sub]) => (
            <NavRow key={label} $sub={sub} $selected={label === "General"}>{!sub && <Tri s={8} color="#aaa" hollow />}<span>{label}</span></NavRow>
          ))}
        </DialogNav>
        <EditorColumn>
          <label htmlFor="name">Name:</label>
          <NameBox id="name" defaultValue="Package1" />
          <EditorBar>
            <FormatLetter $bold>B</FormatLetter>
            <FormatLetter><i>I</i></FormatLetter>
            <FormatLetter><u>U</u></FormatLetter>
            <button aria-label="Colour"><ColourIcon /></button>
            <Tri s={5} />
            <ToolSep />
            <button aria-label="Bullets"><Bullets /></button>
            <button aria-label="Numbering"><Bullets numbered /></button>
            <ToolSep />
            <button aria-label="Superscript"><svg width="13" height="14" viewBox="0 0 13 14"><path d="M1 6l6 7M7 6l-6 7" stroke="#6b6880" strokeWidth="1.5" /><path d="M9 1h3v2.5H9V6h3" fill="none" stroke="#c04444" strokeWidth="1.2" /></svg></button>
            <button aria-label="Subscript"><svg width="13" height="14" viewBox="0 0 13 14"><path d="M1 1l6 7M7 1L1 8" stroke="#6b6880" strokeWidth="1.5" /><path d="M9 8h3v2.5H9V13h3" fill="none" stroke="#5a7ad0" strokeWidth="1.2" /></svg></button>
            <button aria-label="Hyperlink"><Globe /></button>
            <ToolSep />
            <button aria-label="Document"><DocIcon /></button>
          </EditorBar>
          <Notes aria-label="Notes" />
        </EditorColumn>
        <FormColumn>
          <FormBox>
            <Field id="stereotype" label="Stereotype:" value="perspective workspace" w={138} small readOnly>
              <PushButton $w={34} $h={20} $ml={3}>Edit</PushButton>
            </Field>
            <Field id="status" label="Status:" value="Proposed" type="select" />
            <Field id="alias" label="Alias:" />
            <Field id="keywords" label="Keywords:" />
            <Field id="author" label="Author:" value="The Administrator" w={136} type="select" />
            <Field id="complexity" label="Complexity:" value="Easy" w={136} type="select" />
            <Field id="language" label="Language:" value="Java" w={136} type="select" />
            <Field id="version" label="Version:" value="1.0" w={73} />
            <Field id="phase" label="Phase:" value="1.0" w={73} />
            <Field id="package" label="Package:" value="Model" first readOnly />
            <Field id="created" label="Created:" value="7/8/2024 10:26:03 AM" w={136} readOnly />
            <Field id="modified" label="Modified:" value="7/8/2024 10:26:16 AM" w={136} readOnly />
          </FormBox>
          <FormTabs><FormTab $active>Main</FormTab><FormTab>Advanced</FormTab><FormTab>Tags</FormTab></FormTabs>
        </FormColumn>
      </DialogBody>
      <ButtonRow $rule $margin="0 6px 0 7px" $padding="7px 6px 12px 0">
        <PushButton $w={75} $primary>OK</PushButton>
        <PushButton $w={75}>Cancel</PushButton>
        <PushButton $w={75} disabled>Apply</PushButton>
        <PushButton $w={75}>Help</PushButton>
      </ButtonRow>
    </Dialog>
  );
}

function StereotypeDialog() {
  return (
    <Dialog role="dialog" aria-label="Stereotype" $x={572} $y={290} $w={394}>
      <DialogTitle $pad={10}><h1>Stereotype for Package1</h1><button aria-label="Close stereotype dialog"><Cross s={9} color="#c3cedb" w={1} /></button></DialogTitle>
      <GroupBox>
        <legend>Stereotypes</legend>
        <GroupRow><label htmlFor="perspective">Perspective:</label><Select id="perspective" value="Perspective2" $strong $h={22} $size={11} $pad={5} /></GroupRow>
        <GroupRow><label htmlFor="profile">Profile:</label><Select id="profile" value="ModelPerspectives" /></GroupRow>
        <StereoFrame>
          <StereoTable>
            <colgroup><col width="157" /><col width="158" /><col /></colgroup>
            <thead><tr><th><span>Stereotypes <Tri dir="up" s={8} color="#777" /></span></th><th>Apply to</th><th aria-label="Extra" /></tr></thead>
            <tbody><tr><td><label><Check><input type="checkbox" defaultChecked /><Tick /></Check>perspective workspace</label></td><td>Package</td><td /></tr></tbody>
          </StereoTable>
        </StereoFrame>
        <ButtonRow $margin="0" $padding="0">
          <PushButton $w={76} $h={22}>New...</PushButton>
          <PushButton $w={76} $h={22} $primary>OK</PushButton>
          <PushButton $w={76} $h={22}>Cancel</PushButton>
          <PushButton $w={76} $h={22}>Help</PushButton>
        </ButtonRow>
      </GroupBox>
    </Dialog>
  );
}

export default function App() {
  return (
    <>
      <Global />
      <Shell>
        <Header>
          <AppButton aria-label="Application menu"><Logo /><Tri s={5} color="#fff" /></AppButton>
          <RibbonTab $w={51} $active>Start</RibbonTab>
          <RibbonTab $w={78}>Specialize</RibbonTab>
          <RibbonTab $w={74}>Settings</RibbonTab>
          <FindCommand>
            <svg width="12" height="14" viewBox="0 0 12 14"><path d="M4 10C4 8 1.5 7.5 1.5 5a4.5 4.5 0 0 1 9 0C10.5 7.5 8 8 8 10zM4 12h4M5 13.5h2" fill="none" stroke="#c3cedb" strokeWidth="1.1" /></svg>
            <input placeholder="Find Command..." aria-label="Find Command" />
          </FindCommand>
          <Waves width="165" height="11" viewBox="0 0 165 11" fill="none" stroke="#456a94">
            <path d="M0 0c35 14 90 10 160 0M8 0c35 11 80 9 140 0M18 0c30 9 75 7 118 0M28 0c30 7 60 5 98 0M40 0c20 4 50 4 75 0M5 0c30 14 70 11 115 4" />
          </Waves>
          <HeaderRight>
            <button><svg width="13" height="13" viewBox="0 0 13 13"><circle cx="6.5" cy="6.5" r="5" fill="none" stroke="#fff" strokeWidth="2" /><circle cx="6.5" cy="6.5" r="2" fill="#fff" /></svg>Perspective2<Chevron color="#dfe6ee" /></button>
            <button><svg width="12" height="14" viewBox="0 0 14 16"><Person color="#fff" /></svg>The Administrator<Chevron color="#dfe6ee" /></button>
          </HeaderRight>
        </Header>
        <RibbonBar />
        <AddressBar>
          <NavButton aria-label="Back"><Arrow dir="left" fill="#1480bb" /></NavButton>
          <NavButton aria-label="Forward"><Arrow dir="right" fill="#7db8d8" /></NavButton>
          <Crumbs>
            <Tri dir="right" s={9} color="#333" /><a href="#root">/</a>
            <Tri dir="right" s={9} color="#333" /><a href="#model">Model</a>
            <Tri dir="right" s={9} color="#333" /><a href="#package1">Package1</a>
            <Tri dir="right" s={9} color="#333" />
          </Crumbs>
          <Tri dir="right" s={15} color="#625c78" />
          <FindPackage placeholder="Find Package" aria-label="Find Package" />
          <AddressTools>
            <button aria-label="Search packages"><svg width="16" height="16" viewBox="0 0 16 16"><path d="M1.5 14.5L7 9" stroke="#b98a78" strokeWidth="3" /><circle cx="10" cy="6" r="4.8" fill="#c8dcf5" stroke="#7d8fd0" strokeWidth="1.6" /></svg></button>
            <button aria-label="Layout"><Marks /></button>
            <ToolSep />
            <button aria-label="Menu"><svg width="12" height="12" viewBox="0 0 12 12"><path d="M0 1h12M0 6h12M0 11h12" stroke="#777" strokeWidth="2" /></svg></button>
          </AddressTools>
        </AddressBar>
        <Workspace>
          <Browser />
          <Toolbox />
          <Diagram />
          <PropertyPanel />
          <SideStrip>
            <button>Notes</button><button>Traceability</button><button>Timelines</button><button>Discuss &amp; Review</button>
          </SideStrip>
        </Workspace>
        <OutputTabs><button>Features</button><button>System Output</button><button>Test Cases</button></OutputTabs>
        <StatusBar>
          <StatusCell $w={224}>Perspective Workspace Diagram:Package1:</StatusCell>
          <StatusCell $w={161}>created: 7/8/2024 10:26:49 AM</StatusCell>
          <StatusCell $w={165}>modified: 7/8/2024 3:03:36 PM</StatusCell>
          <StatusCell $w={37}>125%</StatusCell>
          <StatusCell $w={60}>850 x 1098</StatusCell>
          <Spring />
          <StatusCell $w={85}>Perspective2</StatusCell>
          <Zoom>
            <svg width="8" height="8" viewBox="0 0 8 8"><path d="M0 4h8" stroke="#999" strokeWidth="1.5" /></svg>
            <input type="range" min="0" max="100" defaultValue="0" aria-label="Zoom" />
            <svg width="9" height="9" viewBox="0 0 9 9"><path d="M0 4.5h9M4.5 0v9" stroke="#999" strokeWidth="1.5" /></svg>
          </Zoom>
          <StatusCell $w={35} $dim>CAP</StatusCell>
          <StatusCell $w={40}>NUM</StatusCell>
          <StatusCell $w={40} $dim>SCRL</StatusCell>
          <StatusCell $w={38} $dim>CLOUD</StatusCell>
        </StatusBar>
        <PackageDialog />
        <StereotypeDialog />
      </Shell>
    </>
  );
}
